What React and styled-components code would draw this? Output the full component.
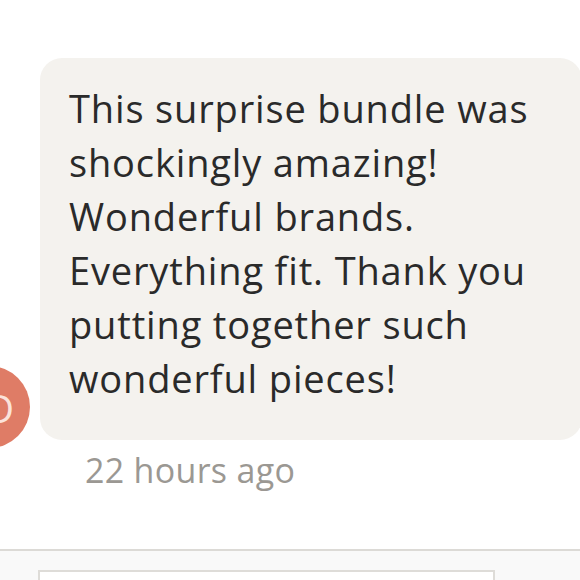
import React from "react";
import styled, { createGlobalStyle } from "styled-components";

const Global = createGlobalStyle`
  html, body { margin: 0; padding: 0; background: #ffffff; }
  body { width: 580px; height: 580px; overflow: hidden; font-family: "Open Sans", "Lato", sans-serif; }
`;

const Page = styled.div`
  width: 580px;
  height: 580px;
  display: flex;
  flex-direction: column;
  overflow: hidden;
`;

const Thread = styled.div`
  flex: 1;
  padding-top: 58px;
  display: flex;
  flex-direction: column;
`;

const MessageRow = styled.div`
  display: flex;
  align-items: flex-end;
  gap: 10px;
  margin-left: -52px;
`;

const Avatar = styled.div`
  flex: 0 0 82px;
  width: 82px;
  height: 82px;
  box-sizing: border-box;
  padding-left: 22px;
  border-radius: 50%;
  background: #df7c66;
  color: #fbe3db;
  display: flex;
  align-items: center;
  justify-content: center;
  font-size: 39px;
  font-weight: 400;
  margin-bottom: -8px;
`;

const Bubble = styled.div`
  width: 542px;
  flex: 0 0 542px;
  box-sizing: border-box;
  background: #f4f2ee;
  border-radius: 22px;
  padding: 23px 14px 35px 29px;
  color: #2a2a2a;
  font-size: 38px;
  line-height: 54px;
  letter-spacing: 0.85px;
`;

const Time = styled.div`
  margin: 10px 0 0 85px;
  font-size: 34px;
  line-height: 40px;
  letter-spacing: 0.3px;
  color: #9b9893;
`;

const Composer = styled.div`
  height: 10px;
  border-top: 2px solid #dcdad6;
  background: #f9f9f9;
  padding: 19px 0 0 38px;
`;

const Input = styled.div`
  width: 457px;
  height: 10px;
  box-sizing: border-box;
  border: 2px solid #dedcd8;
  border-bottom: none;
  background: #ffffff;
`;

export default function App() {
  return (
    <Page>
      <Global />
      <Thread>
        <MessageRow>
          <Avatar>D</Avatar>
          <Bubble>
            This surprise bundle was shockingly amazing! Wonderful brands.
            Everything fit. Thank you putting together such wonderful pieces!
          </Bubble>
        </MessageRow>
        <Time>22 hours ago</Time>
      </Thread>
      <Composer>
        <Input />
      </Composer>
    </Page>
  );
}
